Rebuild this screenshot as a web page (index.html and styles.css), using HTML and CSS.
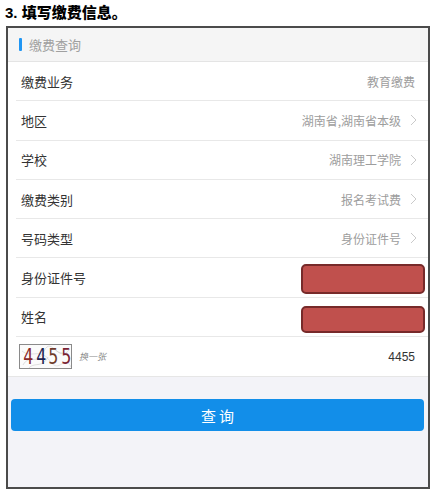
FILE: index.html
```html
<!DOCTYPE html>
<html lang="zh">
<head>
<meta charset="utf-8">
<link rel="stylesheet" href="styles.css">
</head>
<body>
<h1 class="title">3. 填写缴费信息。</h1>
<div class="frame">
  <div class="head"><span class="bar"></span><span class="head-text">缴费查询</span></div>
  <div class="list">
    <div class="row"><span class="label">缴费业务</span><span class="value">教育缴费</span></div>
    <div class="row"><span class="label">地区</span><span class="value">湖南省,湖南省本级</span><svg class="chev" width="7" height="12" viewBox="0 0 7 12"><polyline points="1,1 6,6 1,11" fill="none" stroke="#cacaca" stroke-width="1"/></svg></div>
    <div class="row"><span class="label">学校</span><span class="value">湖南理工学院</span><svg class="chev" width="7" height="12" viewBox="0 0 7 12"><polyline points="1,1 6,6 1,11" fill="none" stroke="#cacaca" stroke-width="1"/></svg></div>
    <div class="row"><span class="label">缴费类别</span><span class="value">报名考试费</span><svg class="chev" width="7" height="12" viewBox="0 0 7 12"><polyline points="1,1 6,6 1,11" fill="none" stroke="#cacaca" stroke-width="1"/></svg></div>
    <div class="row"><span class="label">号码类型</span><span class="value">身份证件号</span><svg class="chev" width="7" height="12" viewBox="0 0 7 12"><polyline points="1,1 6,6 1,11" fill="none" stroke="#cacaca" stroke-width="1"/></svg></div>
    <div class="row"><span class="label">身份证件号</span><span class="redact redact-a"></span></div>
    <div class="row"><span class="label">姓名</span><span class="redact redact-b"></span></div>
    <div class="row row-last">
      <div class="captcha">
        <svg class="noise" width="53" height="25" viewBox="0 0 53 25">
          <path d="M3 20 C10 8, 16 22, 24 6 S38 20, 50 4" fill="none" stroke="#d6d6d6" stroke-width="0.8"/>
          <path d="M2 6 C12 14, 20 2, 30 16 S44 8, 51 22" fill="none" stroke="#dcdcdc" stroke-width="0.8"/>
          <path d="M8 24 C14 16, 22 24, 28 12 M34 3 C40 12, 46 4, 50 14" fill="none" stroke="#d0d0d0" stroke-width="0.7"/>
        </svg>
        <span class="d d1">4</span><span class="d d2">4</span><span class="d d3">5</span><span class="d d4">5</span>
      </div>
      <span class="swap">换一张</span>
      <span class="code">4455</span>
    </div>
  </div>
  <div class="footer">
    <button class="btn" type="button">查询</button>
  </div>
</div>
</body>
</html>
```

FILE: styles.css
```css
* { box-sizing: border-box; }
html, body { margin: 0; padding: 0; background: #fff; }
body {
  font-family: "Noto Sans CJK SC", "Noto Sans", sans-serif;
  width: 435px;
  height: 494px;
  overflow: hidden;
}
.title {
  margin: 0;
  padding: 3px 0 0 5px;
  height: 26px;
  font-size: 15px;
  line-height: 19px;
  font-weight: 900;
  color: #000;
  font-family: "Liberation Sans", "Noto Sans CJK SC", sans-serif;
}
.frame {
  margin-left: 6px;
  width: 424px;
  height: 463px;
  border: 2px solid #4b4b4b;
  background: #f3f3f8;
  display: flex;
  flex-direction: column;
}
.head {
  height: 34px;
  background: #f5f5f5;
  border-bottom: 1px solid #e4e4e4;
  display: flex;
  align-items: center;
  padding-left: 11px;
  gap: 7px;
}
.bar {
  width: 3px;
  height: 13px;
  background: #2196f3;
  border-radius: 1px;
}
.head-text {
  font-size: 13px;
  color: #a0a0a0;
}
.list {
  background: #fff;
  border-bottom: 1px solid #e6e6e6;
}
.row {
  height: 39.3px;
  margin-left: 8px;
  padding: 0 13px 0 5px;
  border-bottom: 1px solid #e8e8e8;
  display: flex;
  align-items: center;
}
.row-last { border-bottom: none; }
.label {
  font-size: 13px;
  color: #333;
  flex: 1;
}
.value {
  font-size: 12px;
  color: #9d9d9d;
}
.chev {
  margin-left: 9px;
  margin-right: -2px;
}
.redact {
  width: 124px;
  background: #c0504d;
  border: 2px solid #772a2a;
  border-radius: 5px;
  margin-right: -10px;
}
.redact-a { height: 30px; margin-top: 2px; }
.redact-b { height: 27px; margin-top: 5px; }
.captcha {
  position: relative;
  width: 53px;
  height: 25px;
  margin-left: -2px;
  border: 1px solid #8a8a8a;
  background: #fbfbfb;
  display: flex;
  justify-content: space-around;
  align-items: center;
  padding: 0 2px;
  overflow: hidden;
}
.noise { position: absolute; left: 0; top: 0; }
.d {
  position: relative;
  font-family: "Liberation Sans Narrow", "DejaVu Sans Condensed", "Liberation Sans", sans-serif;
  font-size: 22px;
  line-height: 23px;
  display: inline-block;
  transform: scaleX(0.8);
}
.d1 { color: #8a2a2a; }
.d2 { color: #1d2450; }
.d3 { color: #6e3a2a; }
.d4 { color: #7a2233; }
.swap {
  font-size: 9px;
  color: #888;
  font-style: italic;
  margin-left: 7px;
  flex: 1;
}
.code {
  font-size: 12px;
  color: #333;
  font-family: "Liberation Sans", sans-serif;
}
.footer {
  flex: 1;
  padding: 22px 4px 0 3px;
}
.btn {
  display: block;
  width: 100%;
  height: 32px;
  border: none;
  border-radius: 4px;
  background: #128ee9;
  color: #fff;
  font-family: "Noto Sans CJK SC", sans-serif;
  font-size: 15px;
  letter-spacing: 3px;
  padding: 0 0 0 3px;
}
```
